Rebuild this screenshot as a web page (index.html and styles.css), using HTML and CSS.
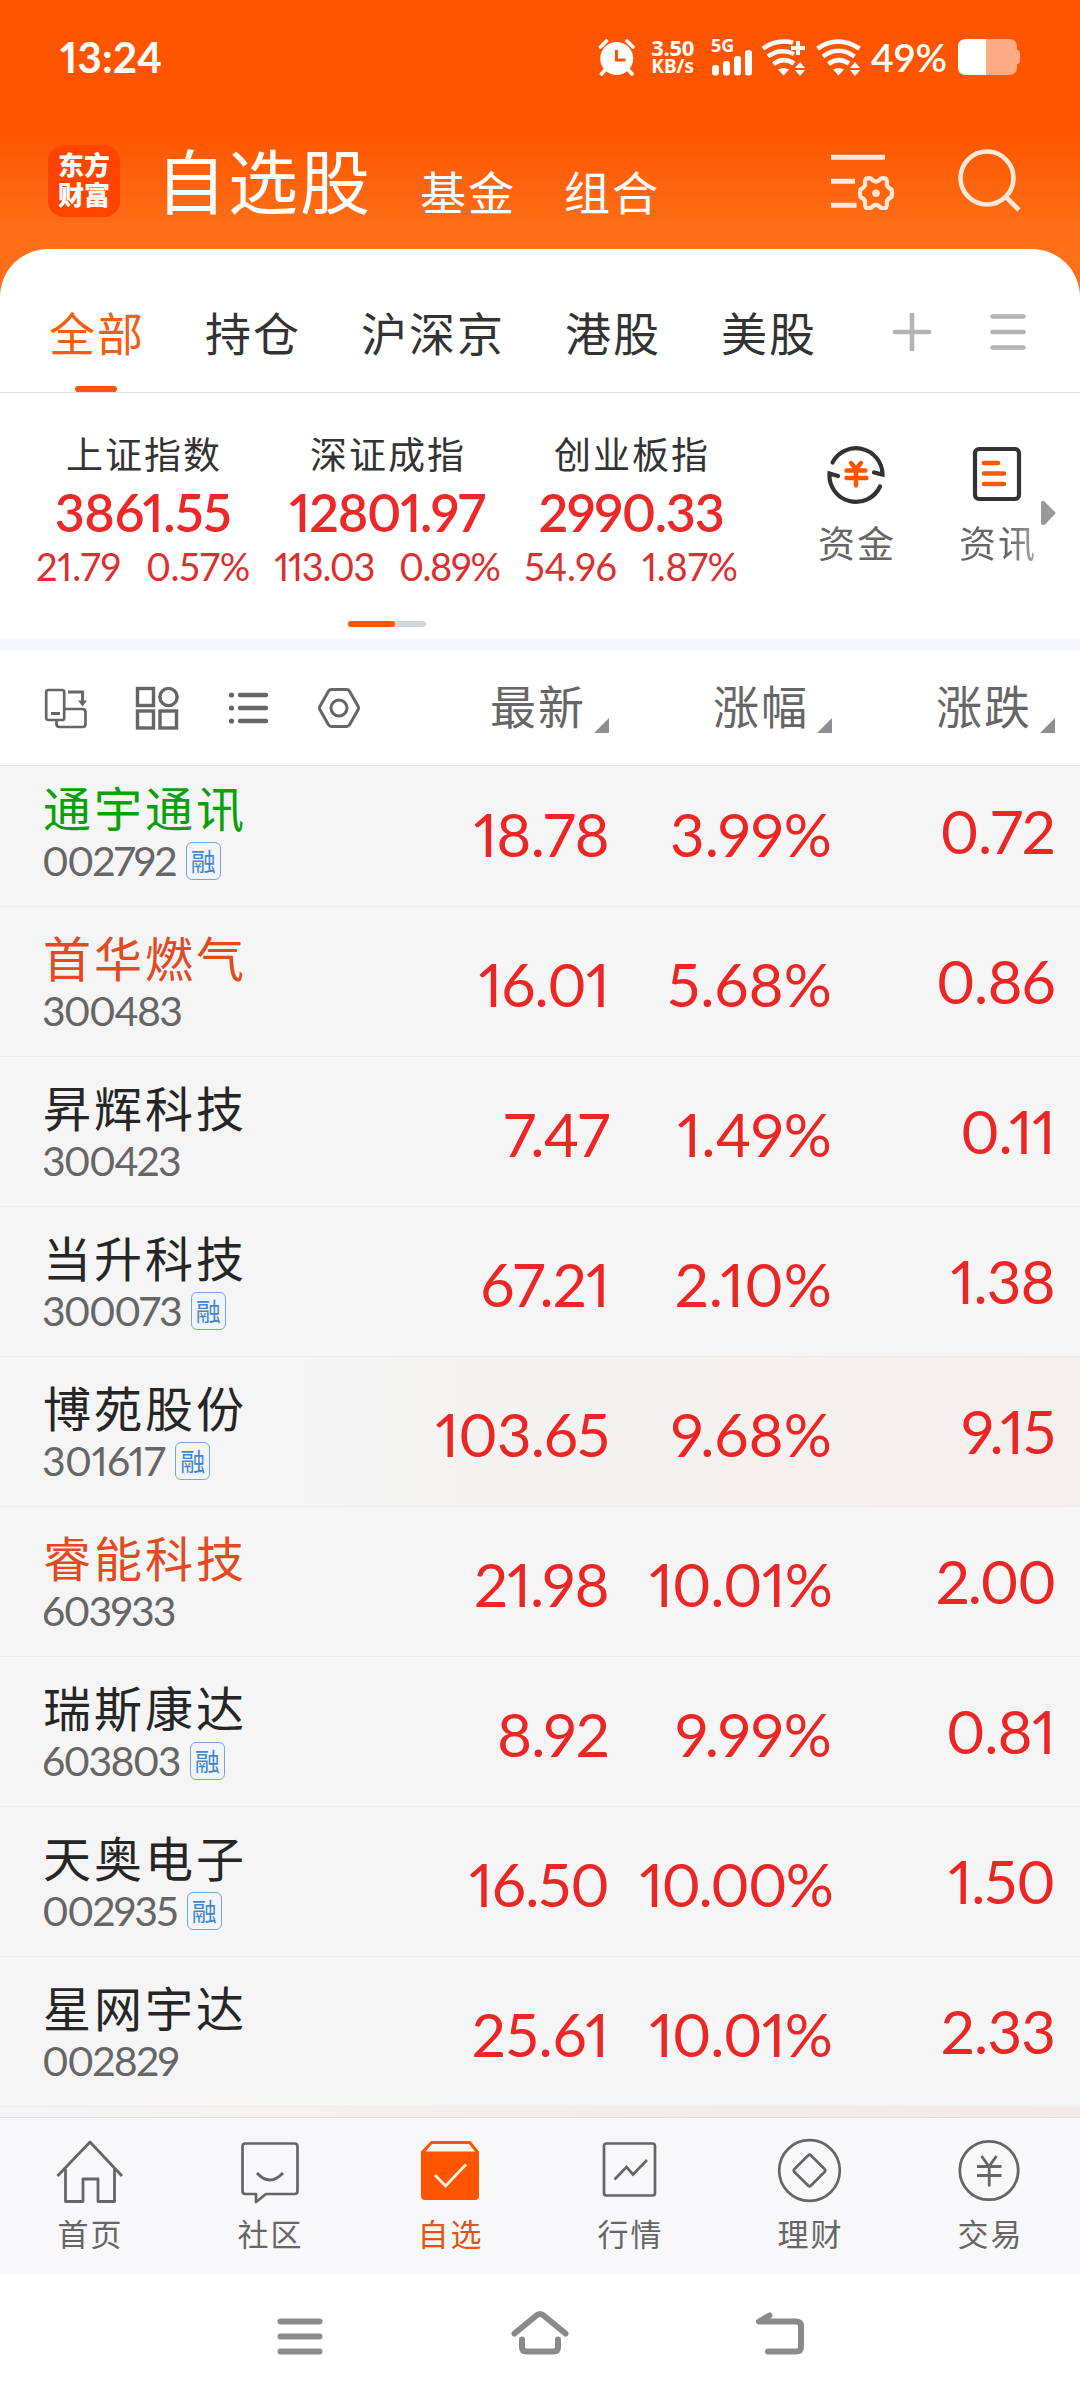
FILE: index.html
```html
<!DOCTYPE html>
<html lang="zh-CN">
<head>
<meta charset="utf-8">
<title>自选股</title>
<link rel="stylesheet" href="styles.css">
</head>
<body>
<div class="screen">
  <header class="top">
    <div class="status">
      <span class="clock">13:24</span>
      <div class="status-icons">
        <svg class="alarm" width="38" height="38" viewBox="0 0 38 38"><circle cx="18.700" cy="20.500" r="16.500" fill="#fff"/><path d="M2.500 9 8.500 3M35 9 29 3M7 32l-3.500 4M30.500 32l3.500 4" stroke="#fff" stroke-width="3.600" stroke-linecap="round"/><path d="M18.500 12v10h9" fill="none" stroke="#ff5500" stroke-width="3"/></svg>
        <div class="speed"><span class="speed-num">3.50</span><span>KB/s</span></div>
        <div class="cell"><span class="net">5G</span>
          <svg width="42" height="26" viewBox="0 0 42 26"><g fill="#fff"><rect x="1" y="15" width="7" height="10.500" rx="3"/><rect x="12" y="11" width="7" height="14.500" rx="3"/><rect x="23" y="6" width="7" height="19.500" rx="3"/><rect x="34" y="0" width="7" height="25.500" rx="3"/></g></svg>
        </div>
        <svg class="wifi" width="46" height="38" viewBox="0 0 46 38"><g fill="none" stroke="#fff" stroke-width="4.600"><path d="M2 10.500Q15 1 32 4.500"/><path d="M7 18.500Q19 9.500 33 16"/><path d="M12.500 26Q22.500 18.500 33 25.500"/></g><path d="M17 31.500q5.500-3 11 0l-5.500 6zM39 24l5 6H34zM34 32h10l-5 6z" fill="#fff"/><path d="M37 3v14M30 10h14" stroke="#fff" stroke-width="4"/></svg>
        <svg class="wifi" width="46" height="38" viewBox="0 0 46 38"><g fill="none" stroke="#fff" stroke-width="4.600"><path d="M1.500 10.500Q22-3.500 43.500 10.500"/><path d="M7 18.500Q22.500 7 38.500 18.500"/><path d="M12.500 26Q22.500 18.500 33 25.500"/></g><path d="M17 31.500q5.500-3 11 0l-5.500 6zM39 24l5 6H34zM34 32h10l-5 6z" fill="#fff"/></svg>
        <span class="power">49%</span>
        <svg class="battery" width="64" height="38" viewBox="0 0 64 38"><path d="M29 1h23q8 0 8 8v3q3 0 3 3v8q0 3-3 3v3q0 8-8 8H29z" fill="#ffab85"/><path d="M29 1H9Q1 1 1 9v20q0 8 8 8h20z" fill="#fff"/></svg>
      </div>
    </div>
    <div class="titlebar">
      <div class="logo"><span>东方</span><span>财富</span></div>
      <h1 class="title">自选股</h1>
      <span class="subtitle">基金</span>
      <span class="subtitle">组合</span>
      <svg class="listset" width="64" height="60" viewBox="0 0 64 60"><g fill="none" stroke="#ffe7da" stroke-width="5"><path d="M0 7.200h54M0 31.200h24M0 55.200h25.500"/><path stroke-width="4.200" stroke-linejoin="round" d="M35 28.800Q39.500 27 42 30.500Q45 32.500 48 30.500Q50.500 27 55 28.800Q56.500 31 55.800 35Q57 38 60.500 39.500Q61.500 43.200 60.500 47Q57 48.500 55.800 51.500Q56.500 55.500 55 57.700Q50.500 59.500 48 56Q45 54 42 56Q39.500 59.500 35 57.700Q33.500 55.500 34.200 51.500Q33 48.500 29.500 47Q28.500 43.200 29.500 39.500Q33 38 34.200 35Q33.500 31 35 28.800Z"/></g><circle cx="45" cy="43.200" r="3.800" fill="#ffe7da"/></svg>
      <svg class="search" width="64" height="66" viewBox="0 0 64 66"><g fill="none" stroke="#ffe7da" stroke-width="4.600"><circle cx="29" cy="30" r="26.500"/><path d="M47 48l14 14"/></g></svg>
    </div>
  </header>

  <section class="sheet">
    <nav class="tabs">
      <a class="tab active">全部</a><a class="tab">持仓</a><a class="tab">沪深京</a><a class="tab">港股</a><a class="tab">美股</a>
      <svg class="plus" width="40" height="40" viewBox="0 0 40 40"><path d="M3 20h34M20 3v34" stroke="#b3b3b3" stroke-width="4.600" stroke-linecap="round"/></svg>
      <svg class="menu" width="36" height="40" viewBox="0 0 36 40"><path d="M2.500 4.500h31M2.500 20h31M2.500 35.500h31" stroke="#b3b3b3" stroke-width="4.600" stroke-linecap="round"/></svg>
    </nav>

    <div class="market">
      <div class="indices">
        <div class="index"><span class="iname">上证指数</span><span class="ival wide">3861.55</span><div class="isub"><span>21.79</span><span>0.57%</span></div></div>
        <div class="index"><span class="iname">深证成指</span><span class="ival">12801.97</span><div class="isub tight"><span>113.03</span><span>0.89%</span></div></div>
        <div class="index"><span class="iname">创业板指</span><span class="ival">2990.33</span><div class="isub"><span>54.96</span><span>1.87%</span></div></div>
        <div class="pager"><i></i></div>
      </div>
      <a class="quick">
        <svg width="62" height="62" viewBox="0 0 62 62"><g fill="none" stroke="#333" stroke-width="4.200" stroke-linecap="round"><path d="M7.500 19.500A26.500 26.500 0 0 1 57.500 31.500L49 29.500"/><path d="M55 43.500A26.500 26.500 0 0 1 4.500 30.500L13 33"/></g><path d="M26 20l5 6 5-6M21.500 27.500h19M21.500 35h20M31 27v15.500" fill="none" stroke="#ff5500" stroke-width="4.400" stroke-linecap="round"/></svg>
        <span>资金</span>
      </a>
      <a class="quick">
        <svg width="62" height="62" viewBox="0 0 62 62"><rect x="9" y="6" width="44" height="50" rx="4" fill="none" stroke="#333" stroke-width="4.200"/><path d="M18 20h14M18 30.500h20M18 41h20" stroke="#f45a0a" stroke-width="4.600" stroke-linecap="round"/></svg>
        <span class="fade">资讯</span>
      </a>
      <svg class="more" width="16" height="26" viewBox="0 0 16 26"><path d="M1 3q0-3 3-2l11 11q1 1 0 2L5 24.500Q1 26 1 23z" fill="#999"/></svg>
    </div>

    <div class="columns">
      <div class="tools">
        <svg width="44" height="44" viewBox="0 0 44 44"><g fill="none" stroke="#666" stroke-width="2.700"><rect x="2.200" y="4" width="18" height="30" rx="2"/><path d="M7 27.500h9" stroke-width="3"/><path d="M12.500 35v3q0 3 3 3h23q3 0 3-3V26q0-3-3-3H21"/><path d="M24 6h14.500v10" stroke-width="3"/></g><path d="M34 14.500h9l-4.500 6z" fill="#666"/></svg>
        <svg width="44" height="44" viewBox="0 0 44 44"><g fill="none" stroke="#666" stroke-width="3.400"><rect x="2.500" y="2.500" width="16" height="17"/><circle cx="33.500" cy="11" r="8.600"/><rect x="2.500" y="25" width="16" height="17"/><rect x="25" y="25" width="16.500" height="17"/></g></svg>
        <svg width="44" height="44" viewBox="0 0 44 44"><path d="M14 9h26M14 22h26M14 35h26" stroke="#666" stroke-width="4.400" stroke-linecap="round"/><g fill="#666"><circle cx="5.500" cy="9" r="2.600"/><circle cx="5.500" cy="22" r="2.600"/><circle cx="5.500" cy="35" r="2.600"/></g></svg>
        <svg width="44" height="44" viewBox="0 0 44 44"><g fill="none" stroke="#666" stroke-width="3"><path stroke-linejoin="round" d="M14.500 3.500h15q2 0 3 1.700l8.700 15.300q.8 1.500 0 3l-8.700 15.300q-1 1.700-3 1.700h-15q-2 0-3-1.700L2.800 23.500q-.8-1.500 0-3l8.700-15.300q1-1.700 3-1.700z"/><circle cx="22" cy="22" r="8"/></g></svg>
      </div>
      <span class="col">最新<i></i></span><span class="col">涨幅<i></i></span><span class="col">涨跌<i></i></span>
    </div>
  </section>

  <main class="list">
    <div class="row"><div class="stock"><span class="name green">通宇通讯</span><span class="code">002792<b>融</b></span></div><span class="num">18.78</span><span class="num pct">3.99%</span><span class="num diff">0.72</span></div>
    <div class="row"><div class="stock"><span class="name red">首华燃气</span><span class="code">300483</span></div><span class="num">16.01</span><span class="num pct">5.68%</span><span class="num diff">0.86</span></div>
    <div class="row"><div class="stock"><span class="name">昇辉科技</span><span class="code">300423</span></div><span class="num">7.47</span><span class="num pct">1.49%</span><span class="num diff">0.11</span></div>
    <div class="row"><div class="stock"><span class="name">当升科技</span><span class="code">300073<b>融</b></span></div><span class="num">67.21</span><span class="num pct">2.10%</span><span class="num diff">1.38</span></div>
    <div class="row flash"><div class="stock"><span class="name">博苑股份</span><span class="code loose">301617<b>融</b></span></div><span class="num">103.65</span><span class="num pct">9.68%</span><span class="num diff">9.15</span></div>
    <div class="row"><div class="stock"><span class="name red">睿能科技</span><span class="code">603933</span></div><span class="num">21.98</span><span class="num">10.01%</span><span class="num diff tight">2.00</span></div>
    <div class="row"><div class="stock"><span class="name">瑞斯康达</span><span class="code">603803<b>融</b></span></div><span class="num">8.92</span><span class="num pct">9.99%</span><span class="num diff">0.81</span></div>
    <div class="row"><div class="stock"><span class="name">天奥电子</span><span class="code">002935<b>融</b></span></div><span class="num">16.50</span><span class="num tight">10.00%</span><span class="num diff">1.50</span></div>
    <div class="row"><div class="stock"><span class="name">星网宇达</span><span class="code">002829</span></div><span class="num pct">25.61</span><span class="num">10.01%</span><span class="num diff">2.33</span></div>
    <div class="row flash strong"></div>
  </main>

  <nav class="tabbar">
    <a><svg width="70" height="70" viewBox="0 0 70 70"><g fill="none" stroke="#666" stroke-width="2.800" stroke-linejoin="round"><path d="M2.500 41 35 7l32 34"/><path d="M10.500 34v32.500H28V44h15v22.500h16.500V34"/></g></svg><span>首页</span></a>
    <a><svg width="70" height="70" viewBox="0 0 70 70"><g fill="none" stroke="#666" stroke-width="2.700" stroke-linejoin="round"><path d="M10.500 8.500h49q3 0 3 3V56q0 3-3 3H31l-10 8v-8H10.500q-3 0-3-3V11.500q0-3 3-3z"/><path d="M22 38q12.500 14 26 0" stroke-width="3"/></g></svg><span>社区</span></a>
    <a class="on"><svg width="70" height="70" viewBox="0 0 70 70"><path d="M16 6h39.500l8.500 10.500V61q0 4-4 4H10q-4 0-4-4V16.500z" fill="#ff5500"/><path d="M17 9h37l6 7.500H10.500z" fill="#f8f8fa"/><path d="M20 40l10.500 11L51 29.500" fill="none" stroke="#fff0e6" stroke-width="2.800"/></svg><span>自选</span></a>
    <a><svg width="70" height="70" viewBox="0 0 70 70"><g fill="none" stroke="#666" stroke-width="2.700"><rect x="9" y="8.500" width="51" height="52" rx="2.500"/><path d="M19.500 44.500 31.500 32l6.500 7.500 14-14.500"/></g></svg><span>行情</span></a>
    <a><svg width="70" height="70" viewBox="0 0 70 70"><g fill="none" stroke="#666" stroke-width="2.700"><circle cx="34.500" cy="35.500" r="30.300"/><path stroke-linejoin="round" d="M33 20.500q1.500-1.500 3 0L49.500 34q1.500 1.500 0 3L36 50.500q-1.500 1.500-3 0L19.500 37q-1.500-1.500 0-3z"/></g></svg><span>理财</span></a>
    <a><svg width="70" height="70" viewBox="0 0 70 70"><g fill="none" stroke="#666" stroke-width="2.800"><circle cx="34" cy="35.500" r="29.200"/><path d="M26.500 21l7.500 10.500L41.500 21M22 31.500h24.500M22 40.500h24.500M34.200 31v20.500"/></g></svg><span>交易</span></a>
  </nav>

  <div class="sysnav">
    <svg width="60" height="60" viewBox="0 0 60 60"><path d="M10.500 14.500h39M10.500 29.500h39M10.500 44.500h39" stroke="#8a8a8a" stroke-width="6" stroke-linecap="round"/></svg>
    <svg width="60" height="60" viewBox="0 0 60 60"><g fill="none" stroke="#8a8a8a" stroke-width="6" stroke-linecap="round" stroke-linejoin="round"><path d="M4.500 26.500 27 8q3-2 6 0l22.500 18.500"/><path d="M12 32.500V40q0 4.500 4.500 4.500h27Q48 44.500 48 40v-7.500"/></g></svg>
    <svg width="60" height="60" viewBox="0 0 60 60"><path d="M19.500 8.500 9 14.500h37Q51 14.500 51 19v21q0 4.500-5 4.500H18" fill="none" stroke="#8a8a8a" stroke-width="6" stroke-linecap="round" stroke-linejoin="round"/></svg>
  </div>
</div>
</body>
</html>
```

FILE: styles.css
```css
* { box-sizing: border-box; }
body { margin: 0; background: #fff; font-family: "Noto Sans CJK SC", sans-serif; }
svg { display: block; flex: none; }
.screen { width: 1080px; height: 2400px; overflow: hidden; display: flex; flex-direction: column; }

/* Orange header */
.top { height: 320px; flex: none; background: linear-gradient(#ff5500 0, #ff5500 130px, #ff6e17 225px, #ff7019 320px); color: #fff; }
.status { height: 115px; display: flex; align-items: center; padding-left: 60px; font-family: Lato, sans-serif; }
.clock { font-size: 42px; font-weight: 700; line-height: 50px; width: 538px; margin-top: -2px; letter-spacing: 0.2px; font-feature-settings: "pnum"; }
.status-icons { display: flex; align-items: center; height: 38px; margin-top: -1px; }
.speed { width: 46px; margin-left: 12px; display: flex; flex-direction: column; align-items: flex-end; font: 700 19px/19px "Noto Sans", sans-serif; }
.speed-num { font-size: 22px; letter-spacing: -0.3px; }
.cell { margin-left: 17px; width: 42px; height: 38px; }
.net { display: block; font: 700 18px/12px "Noto Sans", sans-serif; height: 12px; margin-top: 1px; }
.cell svg { margin-top: -1px; }
.wifi { margin-left: 8px; }
.wifi + .wifi { margin-left: 9px; }
.power { margin-left: 9px; width: 80px; font-size: 39px; font-weight: 600; line-height: 38px; letter-spacing: -0.4px; }
.battery { margin-left: 6px; }

.titlebar { height: 134px; display: flex; align-items: flex-start; padding-left: 48px; letter-spacing: 2px; }
.logo { width: 72px; height: 72px; margin-top: 30px; border-radius: 16px; background: #ff4400; display: flex; flex-direction: column; align-items: center; padding-top: 4px; font-size: 26px; font-weight: 900; line-height: 30px; letter-spacing: 0; }
.title { margin: 26px 0 0 36px; font-size: 70px; line-height: 76px; font-weight: 400; }
.subtitle { margin: 45px 0 0 48px; font-size: 46px; line-height: 60px; }
.listset { margin: 35px 0 0 171px; }
.search { margin: 33px 0 0 63px; }

/* White sheet */
.sheet { flex: none; height: 516px; margin-top: -71px; background: #fff; border-radius: 48px 48px 0 0; }
.tabs { height: 144px; border-bottom: 1px solid #e3e3e3; display: flex; align-items: stretch; gap: 60px; padding-left: 49px; letter-spacing: 2px; }
.tab { position: relative; font-size: 46px; line-height: 60px; padding-top: 52px; color: #333; }
.tab.active { color: #f0600f; }
.tab.active::after { content: ""; position: absolute; left: 26px; bottom: 0; width: 42px; height: 6px; border-radius: 3px; background: #ff5500; }
.plus { margin: 63px 0 0 15px; }
.menu { margin: 63px 0 0 -2px; }

.market { height: 246px; display: flex; padding-left: 21px; }
.indices { width: 732px; display: grid; grid-template-columns: repeat(3, 244px); grid-template-rows: 228px 6px; }
.index { display: flex; flex-direction: column; align-items: center; padding-top: 38px; }
.iname { font-size: 37px; line-height: 44px; letter-spacing: 2px; margin-left: 2px; color: #333; }
.ival { margin-top: 6px; font: 600 52px/62px Lato, sans-serif; letter-spacing: -1.2px; color: #ec2828; font-feature-settings: "pnum"; }
.ival.wide { letter-spacing: -0.3px; }
.isub { margin-top: 1px; display: flex; gap: 25px; font: 400 38px/44px Lato, sans-serif; letter-spacing: -0.2px; color: #dc3030; font-feature-settings: "pnum"; }
.isub.tight { letter-spacing: -1.3px; }
.pager { grid-column: 1 / 4; justify-self: center; width: 78px; height: 6px; border-radius: 3px; background: #d3d6db; }
.pager i { display: block; width: 47px; height: 6px; border-radius: 3px; background: #ff5500; }
.quick { width: 80px; margin-left: 63px; padding-top: 50px; display: flex; flex-direction: column; align-items: center; font-size: 37px; line-height: 44px; letter-spacing: 2px; color: #666; white-space: nowrap; }
.quick span { margin: 15px 0 0 2px; }
.quick + .quick { margin-left: 61px; }
.fade { background: linear-gradient(90deg, #666 65%, #aaa); -webkit-background-clip: text; background-clip: text; color: transparent; }
.more { margin: 107px 0 0 3px; }

.columns { height: 126px; border-top: 12px solid #f5f7fa; display: grid; grid-template-columns: 332px 234px 223px 223px; padding-left: 43px; }
.tools { display: flex; gap: 47px; padding: 35px 0 0 1px; }
.col { display: flex; justify-content: flex-end; font-size: 46px; line-height: 60px; padding-top: 23px; letter-spacing: 2px; color: #666; }
.col i { width: 15px; height: 15px; margin: 44px 0 0 8px; background: #8e8e93; clip-path: polygon(100% 0, 100% 100%, 0 100%); }

/* Watch list */
.list { flex: none; height: 1352px; overflow: hidden; background: #f5f5f5; border-top: 1px solid #e8e8e8; }
.row { height: 150px; border-bottom: 1px solid #ececec; display: grid; grid-template-columns: 332px 234px 223px 223px; padding-left: 43px; }
.row:first-child { margin-top: -9px; }
.stock { display: flex; flex-direction: column; }
.name { font-size: 48px; line-height: 60px; letter-spacing: 3px; margin-top: 19px; color: #262626; }
.name.green { color: #0aa00a; }
.name.red { color: #e34a22; }
.code { display: flex; align-items: center; height: 46px; margin: 2px 0 0 -1px; font: 400 41px/46px Lato, sans-serif; letter-spacing: -1.8px; color: #666; font-feature-settings: "pnum"; }
.code.loose { letter-spacing: -0.6px; }
.code b { margin-left: 10px; width: 35px; height: 38px; border: 1.500px solid #77a5da; border-radius: 6px; background: #f1f5fa; font: 400 25px/34px "Noto Sans CJK SC", sans-serif; text-align: center; letter-spacing: 0; color: #4585cc; }
.num { text-align: right; font: 400 60px/72px Lato, sans-serif; letter-spacing: -0.8px; padding-top: 41px; color: #eb2726; font-feature-settings: "pnum"; }
.num.diff { padding-top: 38px; }
.num.pct { letter-spacing: 0.1px; }
.num.tight { letter-spacing: -1.800px; }
.flash { background: linear-gradient(90deg, #f5f5f5 25%, #f4f2f0 60%, #f5eeed); }
.strong { background: linear-gradient(90deg, #f5f5f5, #f4eeec 50%, #f5e9e8); }

/* App tab bar */
.tabbar { flex: none; height: 157px; border-top: 1px solid #e0e0e4; background: #f8f8fa; display: grid; grid-template-columns: repeat(6, 180px); color: #666; }
.tabbar a { display: flex; flex-direction: column; align-items: center; padding-top: 17px; font-size: 31px; line-height: 40px; letter-spacing: 2px; }
.tabbar span { margin: 8px 0 0 1px; }
.tabbar .on { color: #e0550f; }
.sysnav { flex: 1; display: flex; justify-content: center; gap: 180px; padding-top: 33px; }
```
